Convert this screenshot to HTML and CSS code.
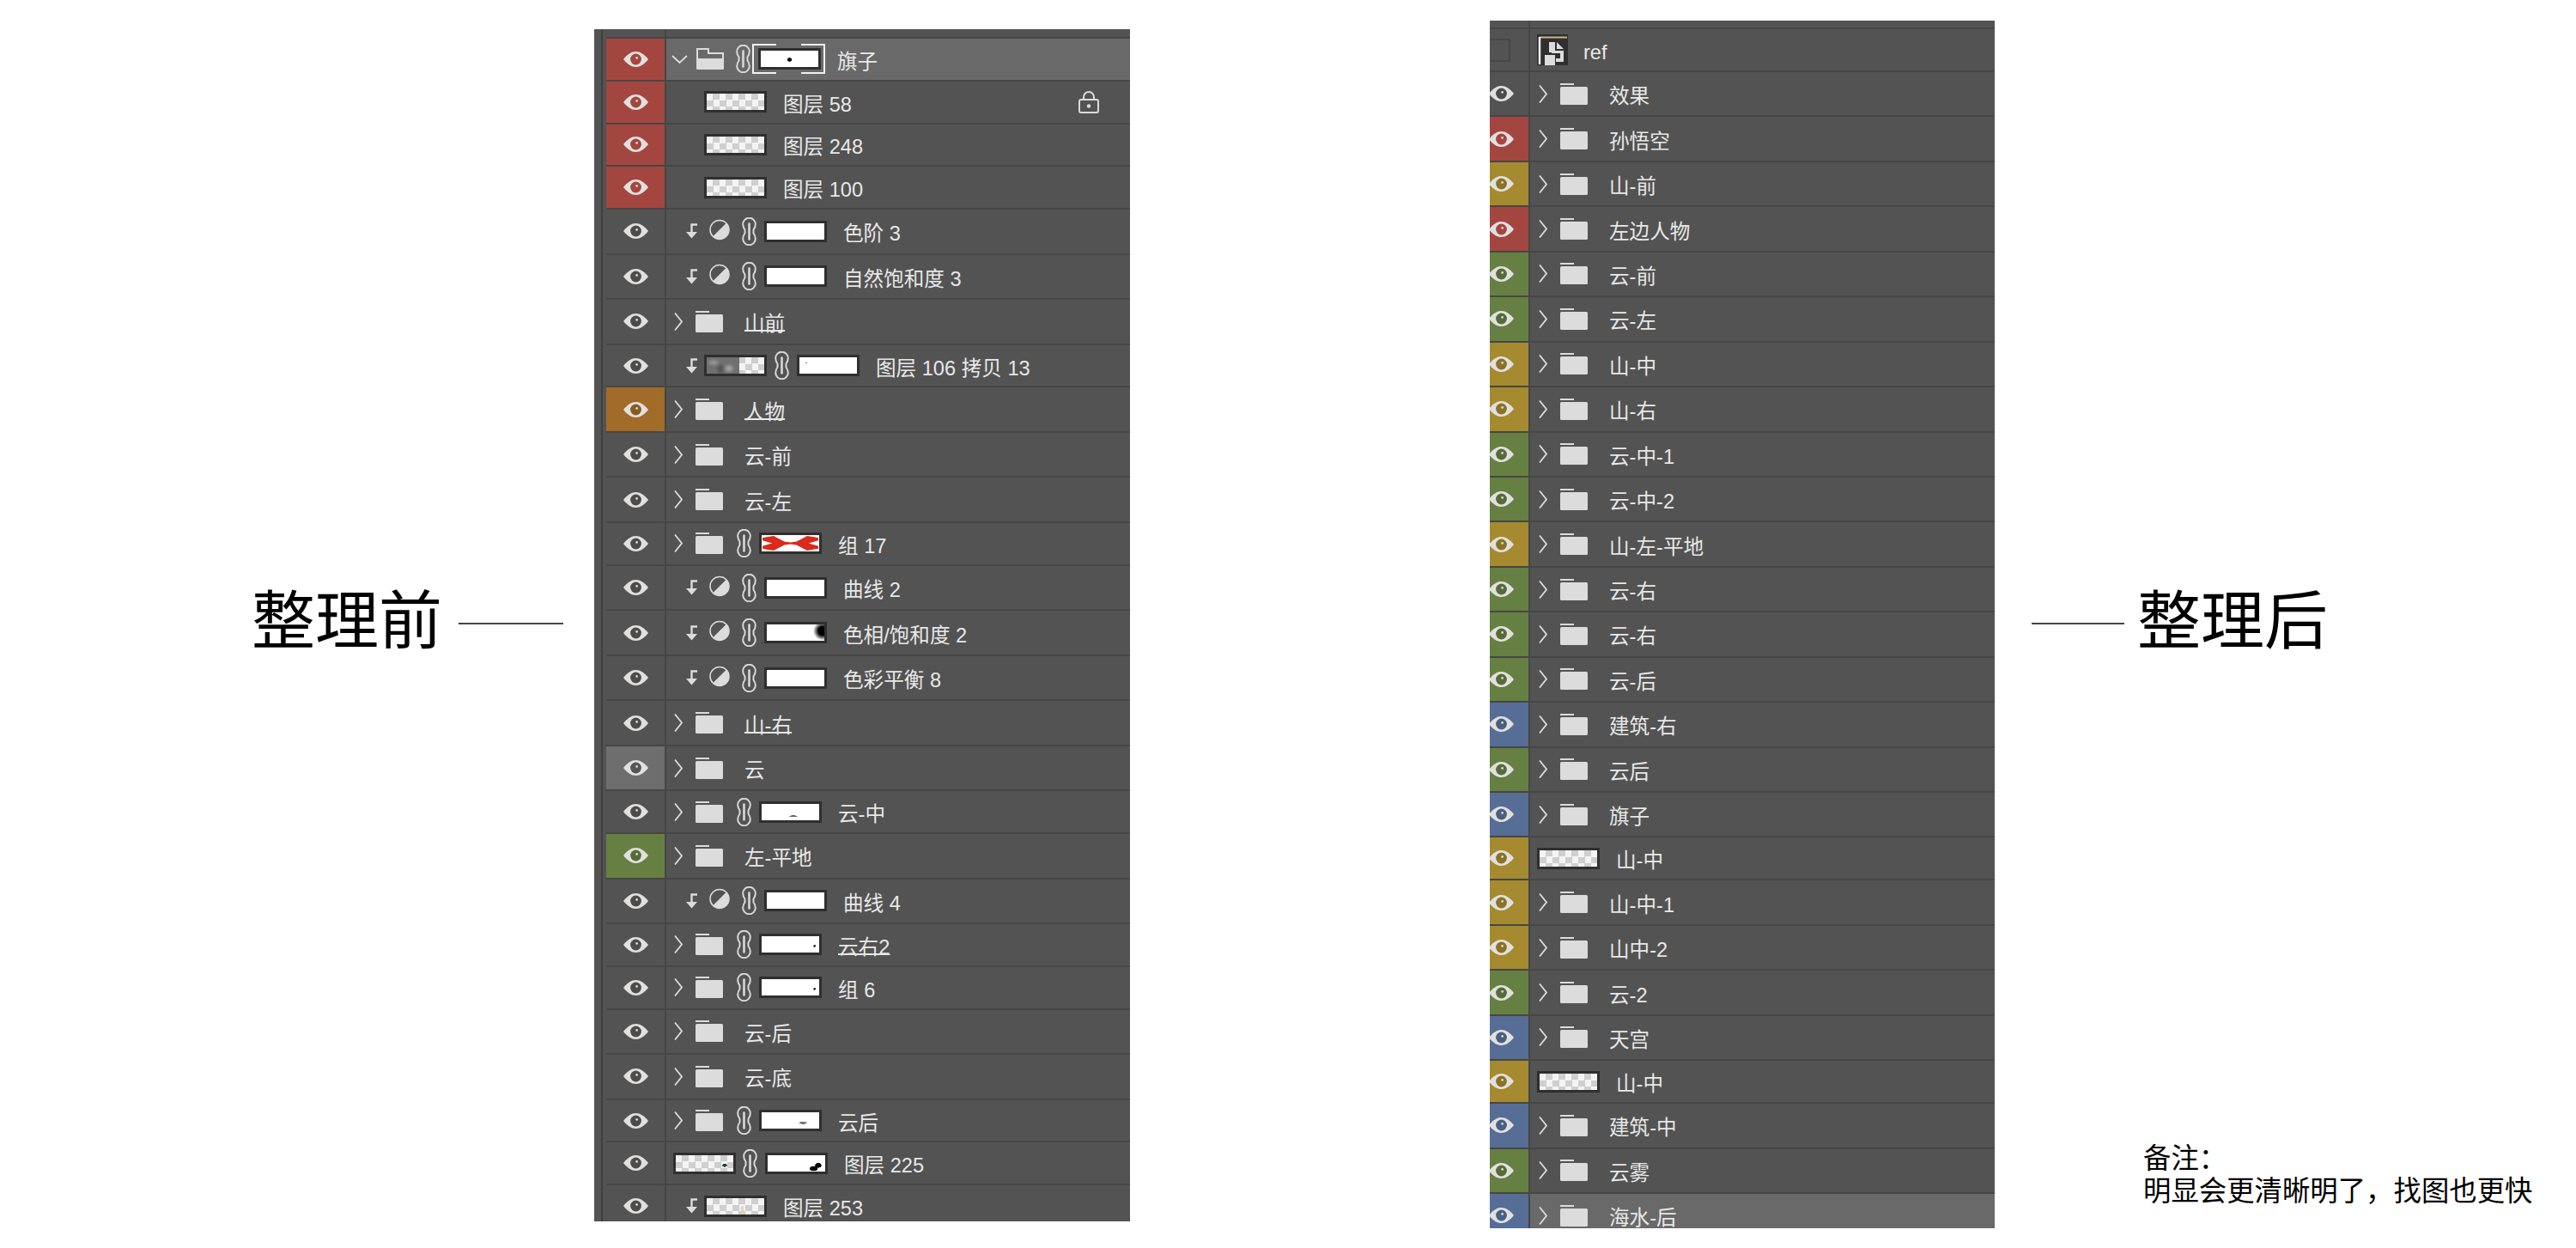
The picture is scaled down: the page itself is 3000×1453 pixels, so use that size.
FILE: index.html
```html
<!DOCTYPE html>
<html lang="zh-CN">
<head>
    <meta charset="UTF-8">
    <title>整理前 整理后</title>
    <link rel="stylesheet" href="styles.css">
</head>
<body>
    <svg class="defs" width="0" height="0">
        <symbol id="eye" viewBox="0 0 29 18">
            <path d="M0 9C5 2.8 9.500 0 14.500 0S24 2.800 29 9C24 15.200 19.500 18 14.500 18S5 15.200 0 9Z" fill="#e2e0de"/>
            <circle cx="14.500" cy="9" r="6.400" fill="currentColor"/>
            <circle cx="15.600" cy="7.400" r="1.300" fill="#e2e0de"/>
        </symbol>
        <symbol id="folder" viewBox="0 0 32 25">
            <rect x="0" y="0" width="16" height="2" fill="#dcdcdc"/>
            <rect x="0" y="4" width="32" height="21" rx="1.500" fill="#dcdcdc"/>
        </symbol>
        <symbol id="folder-open" viewBox="0 0 32 25">
            <path d="M1 13V1H14V6H31V13" fill="none" stroke="#dcdcdc" stroke-width="2"/>
            <path d="M0 12H32V23.500Q32 25 30.500 25H1.500Q0 25 0 23.500Z" fill="#dcdcdc"/>
        </symbol>
        <symbol id="chev" viewBox="0 0 10 21">
            <path d="M1 .5L9 10.500L1 20.500" fill="none" stroke="#dcdcdc" stroke-width="1.800"/>
        </symbol>
        <symbol id="chev-down" viewBox="0 0 19 10">
            <path d="M1 1L9.500 9L18 1" fill="none" stroke="#dcdcdc" stroke-width="1.800"/>
        </symbol>
        <symbol id="link" viewBox="0 0 17 33">
            <path d="M3.500 14.500C2 12.500 1.200 10.500 1.200 8A7.300 7.300 0 0 1 15.800 8C15.800 10.500 15 12.500 13.500 14.500V18.500C15 20.500 15.800 22.500 15.800 25A7.300 7.300 0 0 1 1.200 25C1.200 22.500 2 20.500 3.500 18.500Z" fill="none" stroke="#d8d8d8" stroke-width="2"/>
            <path d="M8.500 7.500V25.500" stroke="#d8d8d8" stroke-width="2.600" stroke-linecap="round"/>
        </symbol>
        <symbol id="adjust" viewBox="0 0 24 25">
            <circle cx="12" cy="12.500" r="11" fill="none" stroke="#dcdcdc" stroke-width="1.500"/>
            <path d="M19.800 4.700A11 11 0 0 1 4.200 20.300Z" fill="#dcdcdc"/>
        </symbol>
        <symbol id="clip" viewBox="0 0 15 18">
            <path d="M14 1.500H7.500V11" fill="none" stroke="#dcdcdc" stroke-width="2.400"/>
            <path d="M1 10H14L7.500 17.500Z" fill="#dcdcdc"/>
        </symbol>
        <symbol id="lock" viewBox="0 0 24 26">
            <rect x="1" y="10" width="22" height="15" rx="2" fill="none" stroke="#dcdcdc" stroke-width="2"/>
            <path d="M6 10V7A6 6 0 0 1 18 7V10" fill="none" stroke="#dcdcdc" stroke-width="2"/>
            <circle cx="12" cy="17.500" r="2.200" fill="#dcdcdc"/>
        </symbol>
    </svg>

    <div class="page">
        <div class="side side-before">
            <div class="caption">
                <span class="caption-text">整理前</span>
                <span class="caption-line"></span>
            </div>
        </div>

        <!-- 整理前 -->
        <div class="panel panel-before">
            <div class="rail"></div>
            <div class="rows">
                <div class="row stub"><div class="eye"></div><div class="main"></div></div>

                <div class="row short selected"><div class="eye red"><svg class="ic-eye"><use href="#eye"/></svg></div><div class="main">
                    <svg class="ic-chev-down"><use href="#chev-down"/></svg><svg class="ic-folder open"><use href="#folder-open"/></svg><svg class="ic-link first"><use href="#link"/></svg><div class="mask m-flag active"></div><span class="label">旗子</span>
                </div></div>
                <div class="row short"><div class="eye red"><svg class="ic-eye"><use href="#eye"/></svg></div><div class="main">
                    <div class="thumb indent"></div><span class="label">图层 58</span><svg class="ic-lock"><use href="#lock"/></svg>
                </div></div>
                <div class="row short"><div class="eye red"><svg class="ic-eye"><use href="#eye"/></svg></div><div class="main">
                    <div class="thumb indent"></div><span class="label">图层 248</span>
                </div></div>
                <div class="row short"><div class="eye red"><svg class="ic-eye"><use href="#eye"/></svg></div><div class="main">
                    <div class="thumb indent"></div><span class="label">图层 100</span>
                </div></div>
                <div class="row"><div class="eye"><svg class="ic-eye"><use href="#eye"/></svg></div><div class="main">
                    <svg class="ic-clip"><use href="#clip"/></svg><svg class="ic-adjust"><use href="#adjust"/></svg><svg class="ic-link"><use href="#link"/></svg><div class="mask"></div><span class="label">色阶 3</span>
                </div></div>
                <div class="row"><div class="eye"><svg class="ic-eye"><use href="#eye"/></svg></div><div class="main">
                    <svg class="ic-clip"><use href="#clip"/></svg><svg class="ic-adjust"><use href="#adjust"/></svg><svg class="ic-link"><use href="#link"/></svg><div class="mask"></div><span class="label">自然饱和度 3</span>
                </div></div>
                <div class="row"><div class="eye"><svg class="ic-eye"><use href="#eye"/></svg></div><div class="main">
                    <svg class="ic-chev"><use href="#chev"/></svg><svg class="ic-folder"><use href="#folder"/></svg><span class="label marked">山前</span>
                </div></div>
                <div class="row short"><div class="eye"><svg class="ic-eye"><use href="#eye"/></svg></div><div class="main">
                    <svg class="ic-clip"><use href="#clip"/></svg><div class="thumb t-rock"></div><svg class="ic-link"><use href="#link"/></svg><div class="mask m-speck-left"></div><span class="label">图层 106 拷贝 13</span>
                </div></div>
                <div class="row"><div class="eye orange"><svg class="ic-eye"><use href="#eye"/></svg></div><div class="main">
                    <svg class="ic-chev"><use href="#chev"/></svg><svg class="ic-folder"><use href="#folder"/></svg><span class="label marked">人物</span>
                </div></div>
                <div class="row"><div class="eye"><svg class="ic-eye"><use href="#eye"/></svg></div><div class="main">
                    <svg class="ic-chev"><use href="#chev"/></svg><svg class="ic-folder"><use href="#folder"/></svg><span class="label">云-前</span>
                </div></div>
                <div class="row"><div class="eye"><svg class="ic-eye"><use href="#eye"/></svg></div><div class="main">
                    <svg class="ic-chev"><use href="#chev"/></svg><svg class="ic-folder"><use href="#folder"/></svg><span class="label">云-左</span>
                </div></div>
                <div class="row short"><div class="eye"><svg class="ic-eye"><use href="#eye"/></svg></div><div class="main">
                    <svg class="ic-chev"><use href="#chev"/></svg><svg class="ic-folder"><use href="#folder"/></svg><svg class="ic-link first"><use href="#link"/></svg>
                    <div class="mask"><svg class="mask-art" viewBox="0 0 66 18" preserveAspectRatio="none"><path d="M1 3L7 2L14 1L18 3L26 7L33 8L40 7L48 3L52 1L59 2L65 3V6L54 9L65 12V15L58 16L52 17L48 15L40 11L33 10L26 11L18 15L14 17L7 16L1 15V12L12 9L1 6Z" fill="#d92b1c"/></svg></div><span class="label">组 17</span>
                </div></div>
                <div class="row"><div class="eye"><svg class="ic-eye"><use href="#eye"/></svg></div><div class="main">
                    <svg class="ic-clip"><use href="#clip"/></svg><svg class="ic-adjust"><use href="#adjust"/></svg><svg class="ic-link"><use href="#link"/></svg><div class="mask"></div><span class="label">曲线 2</span>
                </div></div>
                <div class="row"><div class="eye"><svg class="ic-eye"><use href="#eye"/></svg></div><div class="main">
                    <svg class="ic-clip"><use href="#clip"/></svg><svg class="ic-adjust"><use href="#adjust"/></svg><svg class="ic-link"><use href="#link"/></svg><div class="mask m-shadow"></div><span class="label">色相/饱和度 2</span>
                </div></div>
                <div class="row"><div class="eye"><svg class="ic-eye"><use href="#eye"/></svg></div><div class="main">
                    <svg class="ic-clip"><use href="#clip"/></svg><svg class="ic-adjust"><use href="#adjust"/></svg><svg class="ic-link"><use href="#link"/></svg><div class="mask"></div><span class="label">色彩平衡 8</span>
                </div></div>
                <div class="row"><div class="eye"><svg class="ic-eye"><use href="#eye"/></svg></div><div class="main">
                    <svg class="ic-chev"><use href="#chev"/></svg><svg class="ic-folder"><use href="#folder"/></svg><span class="label marked">山-右</span>
                </div></div>
                <div class="row"><div class="eye grey"><svg class="ic-eye"><use href="#eye"/></svg></div><div class="main">
                    <svg class="ic-chev"><use href="#chev"/></svg><svg class="ic-folder"><use href="#folder"/></svg><span class="label">云</span>
                </div></div>
                <div class="row short"><div class="eye"><svg class="ic-eye"><use href="#eye"/></svg></div><div class="main">
                    <svg class="ic-chev"><use href="#chev"/></svg><svg class="ic-folder"><use href="#folder"/></svg><svg class="ic-link first"><use href="#link"/></svg><div class="mask m-speck-mid"></div><span class="label">云-中</span>
                </div></div>
                <div class="row"><div class="eye green"><svg class="ic-eye"><use href="#eye"/></svg></div><div class="main">
                    <svg class="ic-chev"><use href="#chev"/></svg><svg class="ic-folder"><use href="#folder"/></svg><span class="label">左-平地</span>
                </div></div>
                <div class="row"><div class="eye"><svg class="ic-eye"><use href="#eye"/></svg></div><div class="main">
                    <svg class="ic-clip"><use href="#clip"/></svg><svg class="ic-adjust"><use href="#adjust"/></svg><svg class="ic-link"><use href="#link"/></svg><div class="mask"></div><span class="label">曲线 4</span>
                </div></div>
                <div class="row short"><div class="eye"><svg class="ic-eye"><use href="#eye"/></svg></div><div class="main">
                    <svg class="ic-chev"><use href="#chev"/></svg><svg class="ic-folder"><use href="#folder"/></svg><svg class="ic-link first"><use href="#link"/></svg><div class="mask m-speck-right"></div><span class="label marked">云右2</span>
                </div></div>
                <div class="row short"><div class="eye"><svg class="ic-eye"><use href="#eye"/></svg></div><div class="main">
                    <svg class="ic-chev"><use href="#chev"/></svg><svg class="ic-folder"><use href="#folder"/></svg><svg class="ic-link first"><use href="#link"/></svg><div class="mask m-speck-right"></div><span class="label">组 6</span>
                </div></div>
                <div class="row"><div class="eye"><svg class="ic-eye"><use href="#eye"/></svg></div><div class="main">
                    <svg class="ic-chev"><use href="#chev"/></svg><svg class="ic-folder"><use href="#folder"/></svg><span class="label">云-后</span>
                </div></div>
                <div class="row"><div class="eye"><svg class="ic-eye"><use href="#eye"/></svg></div><div class="main">
                    <svg class="ic-chev"><use href="#chev"/></svg><svg class="ic-folder"><use href="#folder"/></svg><span class="label">云-底</span>
                </div></div>
                <div class="row short"><div class="eye"><svg class="ic-eye"><use href="#eye"/></svg></div><div class="main">
                    <svg class="ic-chev"><use href="#chev"/></svg><svg class="ic-folder"><use href="#folder"/></svg><svg class="ic-link first"><use href="#link"/></svg><div class="mask m-speck-low"></div><span class="label">云后</span>
                </div></div>
                <div class="row short"><div class="eye"><svg class="ic-eye"><use href="#eye"/></svg></div><div class="main">
                    <div class="thumb flush t-moss"></div><svg class="ic-link"><use href="#link"/></svg><div class="mask m-blob"></div><span class="label">图层 225</span>
                </div></div>
                <div class="row short"><div class="eye"><svg class="ic-eye"><use href="#eye"/></svg></div><div class="main">
                    <svg class="ic-clip"><use href="#clip"/></svg><div class="thumb t-peach"></div><span class="label">图层 253</span>
                </div></div>
            </div>
        </div>

        <!-- 整理后 -->
        <div class="panel panel-after">
            <div class="rows">
                <div class="row stub"><div class="eye"></div><div class="main"></div></div>

                <div class="row short"><div class="eye"><span class="check"></span></div><div class="main">
                    <svg class="ic-smart" viewBox="0 0 36 36">
                        <rect width="36" height="36" fill="#2f2f2f"/>
                        <path d="M3 3.500H35" stroke="#c9b98a" stroke-width="2"/>
                        <path d="M3 3V35" stroke="#f2f2f2" stroke-width="2.500"/>
                        <path d="M14 9H21V19H31V32H22V28H27V22H17V21H14Z" fill="#dcdcdc"/>
                        <path d="M23 9L31 17H23Z" fill="#dcdcdc"/>
                        <rect x="9" y="24" width="12" height="12" fill="#dcdcdc"/>
                    </svg><span class="label">ref</span>
                </div></div>
                <div class="row"><div class="eye"><svg class="ic-eye"><use href="#eye"/></svg></div><div class="main"><svg class="ic-chev"><use href="#chev"/></svg><svg class="ic-folder"><use href="#folder"/></svg><span class="label">效果</span></div></div>
                <div class="row"><div class="eye red"><svg class="ic-eye"><use href="#eye"/></svg></div><div class="main"><svg class="ic-chev"><use href="#chev"/></svg><svg class="ic-folder"><use href="#folder"/></svg><span class="label">孙悟空</span></div></div>
                <div class="row"><div class="eye yellow"><svg class="ic-eye"><use href="#eye"/></svg></div><div class="main"><svg class="ic-chev"><use href="#chev"/></svg><svg class="ic-folder"><use href="#folder"/></svg><span class="label">山-前</span></div></div>
                <div class="row"><div class="eye red"><svg class="ic-eye"><use href="#eye"/></svg></div><div class="main"><svg class="ic-chev"><use href="#chev"/></svg><svg class="ic-folder"><use href="#folder"/></svg><span class="label">左边人物</span></div></div>
                <div class="row"><div class="eye green"><svg class="ic-eye"><use href="#eye"/></svg></div><div class="main"><svg class="ic-chev"><use href="#chev"/></svg><svg class="ic-folder"><use href="#folder"/></svg><span class="label">云-前</span></div></div>
                <div class="row"><div class="eye green"><svg class="ic-eye"><use href="#eye"/></svg></div><div class="main"><svg class="ic-chev"><use href="#chev"/></svg><svg class="ic-folder"><use href="#folder"/></svg><span class="label">云-左</span></div></div>
                <div class="row"><div class="eye yellow"><svg class="ic-eye"><use href="#eye"/></svg></div><div class="main"><svg class="ic-chev"><use href="#chev"/></svg><svg class="ic-folder"><use href="#folder"/></svg><span class="label">山-中</span></div></div>
                <div class="row"><div class="eye yellow"><svg class="ic-eye"><use href="#eye"/></svg></div><div class="main"><svg class="ic-chev"><use href="#chev"/></svg><svg class="ic-folder"><use href="#folder"/></svg><span class="label">山-右</span></div></div>
                <div class="row"><div class="eye green"><svg class="ic-eye"><use href="#eye"/></svg></div><div class="main"><svg class="ic-chev"><use href="#chev"/></svg><svg class="ic-folder"><use href="#folder"/></svg><span class="label">云-中-1</span></div></div>
                <div class="row"><div class="eye green"><svg class="ic-eye"><use href="#eye"/></svg></div><div class="main"><svg class="ic-chev"><use href="#chev"/></svg><svg class="ic-folder"><use href="#folder"/></svg><span class="label">云-中-2</span></div></div>
                <div class="row"><div class="eye yellow"><svg class="ic-eye"><use href="#eye"/></svg></div><div class="main"><svg class="ic-chev"><use href="#chev"/></svg><svg class="ic-folder"><use href="#folder"/></svg><span class="label">山-左-平地</span></div></div>
                <div class="row"><div class="eye green"><svg class="ic-eye"><use href="#eye"/></svg></div><div class="main"><svg class="ic-chev"><use href="#chev"/></svg><svg class="ic-folder"><use href="#folder"/></svg><span class="label">云-右</span></div></div>
                <div class="row"><div class="eye green"><svg class="ic-eye"><use href="#eye"/></svg></div><div class="main"><svg class="ic-chev"><use href="#chev"/></svg><svg class="ic-folder"><use href="#folder"/></svg><span class="label">云-右</span></div></div>
                <div class="row"><div class="eye green"><svg class="ic-eye"><use href="#eye"/></svg></div><div class="main"><svg class="ic-chev"><use href="#chev"/></svg><svg class="ic-folder"><use href="#folder"/></svg><span class="label">云-后</span></div></div>
                <div class="row"><div class="eye blue"><svg class="ic-eye"><use href="#eye"/></svg></div><div class="main"><svg class="ic-chev"><use href="#chev"/></svg><svg class="ic-folder"><use href="#folder"/></svg><span class="label">建筑-右</span></div></div>
                <div class="row"><div class="eye green"><svg class="ic-eye"><use href="#eye"/></svg></div><div class="main"><svg class="ic-chev"><use href="#chev"/></svg><svg class="ic-folder"><use href="#folder"/></svg><span class="label">云后</span></div></div>
                <div class="row"><div class="eye blue"><svg class="ic-eye"><use href="#eye"/></svg></div><div class="main"><svg class="ic-chev"><use href="#chev"/></svg><svg class="ic-folder"><use href="#folder"/></svg><span class="label">旗子</span></div></div>
                <div class="row short"><div class="eye yellow"><svg class="ic-eye"><use href="#eye"/></svg></div><div class="main"><div class="thumb flush"></div><span class="label">山-中</span></div></div>
                <div class="row"><div class="eye yellow"><svg class="ic-eye"><use href="#eye"/></svg></div><div class="main"><svg class="ic-chev"><use href="#chev"/></svg><svg class="ic-folder"><use href="#folder"/></svg><span class="label">山-中-1</span></div></div>
                <div class="row"><div class="eye yellow"><svg class="ic-eye"><use href="#eye"/></svg></div><div class="main"><svg class="ic-chev"><use href="#chev"/></svg><svg class="ic-folder"><use href="#folder"/></svg><span class="label">山中-2</span></div></div>
                <div class="row"><div class="eye green"><svg class="ic-eye"><use href="#eye"/></svg></div><div class="main"><svg class="ic-chev"><use href="#chev"/></svg><svg class="ic-folder"><use href="#folder"/></svg><span class="label">云-2</span></div></div>
                <div class="row"><div class="eye blue"><svg class="ic-eye"><use href="#eye"/></svg></div><div class="main"><svg class="ic-chev"><use href="#chev"/></svg><svg class="ic-folder"><use href="#folder"/></svg><span class="label">天宫</span></div></div>
                <div class="row short"><div class="eye yellow"><svg class="ic-eye"><use href="#eye"/></svg></div><div class="main"><div class="thumb flush"></div><span class="label">山-中</span></div></div>
                <div class="row"><div class="eye blue"><svg class="ic-eye"><use href="#eye"/></svg></div><div class="main"><svg class="ic-chev"><use href="#chev"/></svg><svg class="ic-folder"><use href="#folder"/></svg><span class="label">建筑-中</span></div></div>
                <div class="row"><div class="eye green"><svg class="ic-eye"><use href="#eye"/></svg></div><div class="main"><svg class="ic-chev"><use href="#chev"/></svg><svg class="ic-folder"><use href="#folder"/></svg><span class="label">云雾</span></div></div>
                <div class="row selected"><div class="eye blue"><svg class="ic-eye"><use href="#eye"/></svg></div><div class="main"><svg class="ic-chev"><use href="#chev"/></svg><svg class="ic-folder"><use href="#folder"/></svg><span class="label">海水-后</span></div></div>
            </div>
        </div>

        <div class="side side-after">
            <div class="caption">
                <span class="caption-line"></span>
                <span class="caption-text">整理后</span>
            </div>
            <div class="note">
                <p>备注：</p>
                <p>明显会更清晰明了，找图也更快</p>
            </div>
        </div>
    </div>
</body>
</html>
```

FILE: styles.css
```css
* {
    margin: 0;
    padding: 0;
    box-sizing: border-box;
}

body {
    background-color: #fff;
    font-family: "Liberation Sans", "Noto Sans CJK SC", sans-serif;
}

.defs {
    display: block;
    height: 0;
}

.page {
    display: flex;
    width: 3000px;
    height: 1453px;
    overflow: hidden;
}

/* captions */

.side {
    flex: none;
    padding-top: 684px;
}

.side-before {
    width: 692px;
    padding-left: 293px;
}

.side-after {
    width: 677px;
    padding-left: 22px;
}

.caption {
    display: flex;
    align-items: center;
    height: 80px;
}

.caption-text {
    font-size: 74px;
    line-height: 80px;
    color: #000;
    white-space: nowrap;
}

.caption-line {
    width: 122px;
    height: 2px;
    margin: 4px 19px 0 19px;
    background-color: #444;
}

.side-after .caption-line {
    width: 108px;
    margin: 4px 15px 0 21px;
}

.note {
    margin-top: 566px;
    margin-left: 151px;
    font-size: 32.4px;
    line-height: 38px;
    color: #000;
    white-space: nowrap;
}

/* layer panels */

.panel {
    display: flex;
    flex: none;
    overflow: hidden;
    background-color: #535353;
}

.panel-before {
    width: 624px;
    height: 1388px;
    margin-top: 34px;
}

.panel-after {
    width: 588px;
    height: 1406px;
    margin-top: 24px;
    margin-left: 419px;
}

.rail {
    flex: none;
    width: 10px;
    margin-right: 4px;
    border-right: 2px solid #3f3f3f;
}

.rows {
    flex: 1;
    min-width: 0;
}

.row {
    display: flex;
    height: 52.5px;
    border-bottom: 2px solid #464646;
}

.row.short {
    height: 49.8px;
}

.row.stub {
    height: 11px;
}

.panel-after .row {
    height: 52.45px;
}

.panel-after .row.short {
    height: 50px;
}

.panel-after .row.stub {
    height: 10px;
}

.eye {
    display: flex;
    flex: none;
    align-items: center;
    justify-content: center;
    width: 68px;
    overflow: hidden;
    color: #4c4c4c;
}

.panel-after .eye {
    justify-content: flex-start;
    width: 45px;
}

.panel-after .ic-eye {
    margin-left: -1px;
}

.eye.red {
    background-color: #a44640;
    color: #a44640;
}

.eye.yellow {
    background-color: #a58a2f;
    color: #8a7226;
}

.eye.green {
    background-color: #667f42;
    color: #566c38;
}

.eye.blue {
    background-color: #566d96;
    color: #4a5f84;
}

.eye.orange {
    background-color: #a16b28;
    color: #875a22;
}

.eye.grey {
    background-color: #6e6e6e;
    color: #555;
}

.check {
    width: 24px;
    height: 27px;
    border: 2px solid #474747;
    border-left: none;
}

.main {
    display: flex;
    flex: 1;
    align-items: center;
    min-width: 0;
    border-left: 2px solid #464646;
}

.selected .main {
    background-color: #696969;
}

.label {
    margin-top: 6px;
    margin-left: 19px;
    font-size: 23.6px;
    line-height: 28px;
    color: #e8e8e8;
    white-space: nowrap;
}

.label.marked {
    text-decoration: underline;
    text-decoration-thickness: 2px;
    text-decoration-skip-ink: none;
    text-underline-offset: -1px;
}

/* icons */

svg {
    flex: none;
    display: block;
}

.ic-eye {
    flex: none;
    width: 29px;
    height: 18px;
}

.ic-chev {
    width: 10px;
    height: 21px;
    margin-left: 9px;
}

.panel-after .ic-chev {
    margin-left: 10px;
}

.ic-chev-down {
    width: 19px;
    height: 10px;
    margin-left: 6px;
}

.ic-folder {
    width: 32px;
    height: 25px;
    margin-left: 15px;
}

.ic-folder.open {
    margin-left: 10px;
}

.ic-folder + .label {
    margin-left: 25px;
}

.ic-link {
    width: 17px;
    height: 33px;
    margin-left: 14px;
    margin-right: 9px;
}

.ic-link.first {
    margin-left: 16px;
}

.ic-folder.open + .ic-link.first {
    margin-left: 14px;
}

.ic-adjust {
    width: 24px;
    height: 25px;
    margin-left: 13px;
    margin-top: -4px;
}

.ic-clip {
    width: 15px;
    height: 18px;
    margin-left: 22px;
}

.ic-lock {
    width: 24px;
    height: 26px;
    margin-left: auto;
    margin-right: 36px;
}

.ic-smart {
    width: 36px;
    height: 36px;
    margin-left: 8px;
}

.ic-smart + .label {
    margin-left: 18px;
}

/* thumbnails and masks */

.thumb,
.mask {
    position: relative;
    flex: none;
    width: 73px;
    height: 25px;
    border: 3px solid #2f2f2f;
    background-color: #fff;
}

.thumb {
    background-image: repeating-conic-gradient(#cfcfcf 0 25%, #f4f4f4 0 50%);
    background-size: 15px 15px;
}

.thumb.indent {
    margin-left: 44px;
}

.thumb.flush {
    margin-left: 8px;
}

.ic-clip + .thumb {
    margin-left: 7px;
}

.thumb + .ic-link {
    margin-left: 9px;
}

.thumb.flush + .ic-link {
    margin-left: 8px;
}

.mask + .label {
    margin-left: 19px;
}

.mask-art {
    width: 100%;
    height: 100%;
}

.mask.active::before,
.mask.active::after {
    content: "";
    position: absolute;
    top: -8px;
    bottom: -8px;
    width: 26px;
    border: 2px solid #f0f0f0;
}

.mask.active::before {
    left: -10px;
    border-right: none;
}

.mask.active::after {
    right: -8px;
    border-left: none;
}

.m-flag {
    background-image: radial-gradient(ellipse 3px 2.5px at 50% 55%, #111 80%, transparent);
}

.m-shadow {
    background-image: radial-gradient(circle 11px at 97% 40%, #000 45%, transparent);
}

.m-speck-left {
    background-image: radial-gradient(circle 1px at 12% 35%, #888 80%, transparent);
}

.m-speck-mid {
    background-image: radial-gradient(ellipse 5px 1px at 55% 75%, #666 80%, transparent);
}

.m-speck-right {
    background-image: radial-gradient(circle 1.5px at 92% 60%, #333 80%, transparent);
}

.m-speck-low {
    background-image: radial-gradient(ellipse 5px 1.5px at 72% 65%, #777 80%, transparent);
}

.m-blob {
    background-image:
        radial-gradient(ellipse 4px 3px at 88% 62%, #000 85%, transparent),
        radial-gradient(ellipse 5px 3px at 80% 82%, #000 85%, transparent);
}

.t-rock {
    background-image:
        radial-gradient(ellipse 8px 5px at 8px 6px, #999, transparent),
        radial-gradient(ellipse 7px 6px at 26px 13px, #aaa, transparent),
        radial-gradient(ellipse 6px 8px at 16px 14px, #4f4f4f, transparent),
        linear-gradient(#707070, #707070),
        repeating-conic-gradient(#cfcfcf 0 25%, #f4f4f4 0 50%);
    background-size: 38px 100%, 38px 100%, 38px 100%, 38px 100%, 15px 15px;
    background-repeat: no-repeat, no-repeat, no-repeat, no-repeat, repeat;
}

.t-moss {
    background-image:
        radial-gradient(ellipse 3px 2px at 85% 62%, #2f4a20 85%, transparent),
        repeating-conic-gradient(#cfcfcf 0 25%, #f4f4f4 0 50%);
    background-size: auto, 15px 15px;
}

.t-peach {
    background-image:
        radial-gradient(ellipse 2px 6px at 62% 75%, #e8cfb8 80%, transparent),
        repeating-conic-gradient(#cfcfcf 0 25%, #f4f4f4 0 50%);
    background-size: auto, 15px 15px;
}
```
